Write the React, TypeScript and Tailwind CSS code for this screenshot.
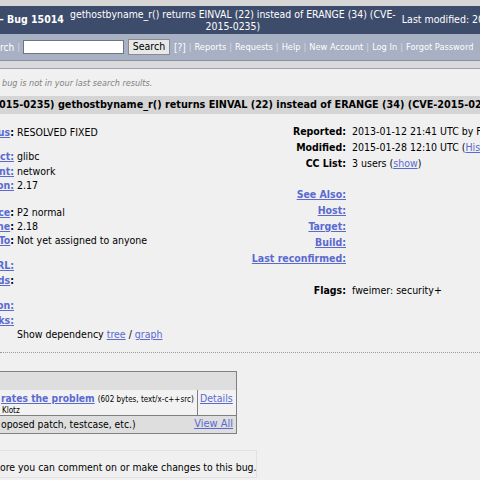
import React from 'react'

const LINK = 'text-[#5a6ad0] underline'

type LeftRow = { linked?: string; tail?: string; value?: React.ReactNode; spacer?: number }

// left column: labels are cut off by the crop, only their ends show
const LEFT: LeftRow[] = [
  { linked: 'Status', tail: ':', value: 'RESOLVED FIXED' },
  { spacer: 10.3 },
  { linked: 'Product:', value: 'glibc' },
  { linked: 'Component:', value: 'network' },
  { linked: 'Version:', value: '2.17' },
  { spacer: 12.3 },
  { linked: 'Importance', tail: ':', value: 'P2 normal' },
  { linked: 'Target Milestone', tail: ':', value: '2.18' },
  { linked: 'Assigned To', tail: ':', value: 'Not yet assigned to anyone' },
  { spacer: 10.3 },
  { linked: 'URL:', value: '' },
  { linked: 'Keywords', tail: ':', value: '' },
  { spacer: 11.3 },
  { linked: 'Depends on:', value: '' },
  { linked: 'Blocks:', value: '' },
  {
    value: (
      <>
        Show dependency <span className={LINK}>tree</span> / <span className={LINK}>graph</span>
      </>
    ),
  },
]

type RightRow = { label?: string; link?: boolean; value?: React.ReactNode; spacer?: number }

const RIGHT: RightRow[] = [
  { label: 'Reported:', value: '2013-01-12 21:41 UTC by Florian Weimer' },
  {
    label: 'Modified:',
    value: (
      <>
        2015-01-28 12:10 UTC (<span className={LINK}>History</span>)
      </>
    ),
  },
  {
    label: 'CC List:',
    value: (
      <>
        3 users (<span className={LINK}>show</span>)
      </>
    ),
  },
  { spacer: 15 },
  { label: 'See Also:', link: true },
  { label: 'Host:', link: true },
  { label: 'Target:', link: true },
  { label: 'Build:', link: true },
  { label: 'Last reconfirmed:', link: true },
  { spacer: 16 },
  { label: 'Flags:', value: 'fweimer: security+' },
]

export default function App() {
  return (
    <div className="w-[480px] h-[480px] overflow-hidden bg-[#f0f0f0] text-black text-[10.5px] font-['DejaVu_Sans_Condensed','DejaVu_Sans',sans-serif]">
      <div className="h-[6px] bg-[#d6d6d6]" />

      {/* header */}
      <div className="h-[28px] bg-[#3e4c6c] flex items-center text-white whitespace-nowrap">
        <span className="font-bold text-[10.5px] -ml-px shrink-0">– Bug 15014</span>
        <div className="ml-[2px] w-[334px] shrink-0 text-center text-[10.4px] leading-[12px]">
          gethostbyname_r() returns EINVAL (22) instead of ERANGE (34) (CVE-
          <br />
          2015-0235)
        </div>
        <span className="ml-[2px] text-[10.5px] shrink-0">Last modified: 2015-01-28 12:10:05 UTC</span>
      </div>

      {/* search bar */}
      <div className="h-[27px] bg-[#a8b0c3] border-b border-[#8891a6] flex items-center text-white text-[9.2px] whitespace-nowrap">
        <span className="shrink-0 text-[10px]">rch</span>
        <span className="mx-[3px] text-[#d8dce6] shrink-0">|</span>
        <div className="w-[101px] h-[14px] shrink-0 bg-white border border-[#6f7480]" />
        <div className="ml-[4px] w-[42px] h-[16px] shrink-0 bg-[#e8e8e8] border border-[#8a8a8a] text-black text-[10.5px] flex items-center justify-center">
          Search
        </div>
        <span className="ml-[4px] shrink-0 text-[10px]">[?]</span>
        {['Reports', 'Requests', 'Help', 'New Account', 'Log In', 'Forgot Password'].map((t) => (
          <React.Fragment key={t}>
            <span className="mx-[3px] text-[#d8dce6] shrink-0">|</span>
            <span className="shrink-0">{t}</span>
          </React.Fragment>
        ))}
      </div>
      <div className="h-[8px] bg-[#dadada] border-b border-[#9aa1b3]" />

      {/* search notice */}
      <div className="mt-[8px] ml-[2px] italic text-[#808080] text-[9px] leading-[13px]">
        bug is not in your last search results.
      </div>

      {/* summary bar */}
      <div className="mt-[6px] h-[18px] bg-[#d5d5d5] flex items-center whitespace-nowrap font-bold text-[10.75px] -ml-px">
        015-0235) gethostbyname_r() returns EINVAL (22) instead of ERANGE (34) (CVE-2015-0235)
      </div>

      {/* fields */}
      <div className="flex mt-[10px] whitespace-nowrap">
        <div className="w-[250px] shrink-0 pt-[1.2px]">
          {LEFT.map((r, i) =>
            r.spacer ? (
              <div key={i} style={{ height: r.spacer }} />
            ) : (
              <div key={i} className="flex h-[14.4px] items-center">
                <div className="w-[110px] -ml-[96px] shrink-0 text-right font-bold">
                  {r.linked && <span className={LINK}>{r.linked}</span>}
                  {r.tail}
                </div>
                <div className="pl-[3px]">{r.value}</div>
              </div>
            ),
          )}
        </div>
        <div>
          {RIGHT.map((r, i) =>
            r.spacer ? (
              <div key={i} style={{ height: r.spacer }} />
            ) : (
              <div key={i} className="flex h-[16px] items-center">
                <div className={`w-[96px] shrink-0 text-right font-bold ${r.link ? LINK : ''}`}>{r.label}</div>
                <div className="pl-[6px]">{r.value}</div>
              </div>
            ),
          )}
        </div>
      </div>

      <div className="mt-[10px] border-t border-dotted border-[#9a9a9a]" />

      {/* attachments */}
      <div className="mt-[18px] -ml-px w-[238px] border border-[#808080] whitespace-nowrap">
        <div className="h-[18px] bg-[#dedede]" />
        <div className="flex h-[25px] bg-[#f2f2f2]">
          <div className="flex-1 min-w-0 pt-[2px] pl-px">
            <div className="leading-[12px]">
              <span className={`${LINK} font-bold text-[10.25px]`}>rates the problem</span>
              <span className="ml-[3px] text-[8px]">(602 bytes, text/x-c++src)</span>
            </div>
            <div className="text-[8px] leading-[10px] pl-px">Klotz</div>
          </div>
          <div className="w-[39px] shrink-0 border-l border-[#808080] pl-[2px] pt-[2px] leading-[12px]">
            <span className={`${LINK} text-[10.5px]`}>Details</span>
          </div>
        </div>
        <div className="flex h-[18px] items-center justify-between bg-[#dedede] border-t border-[#808080] pl-px pr-[3px]">
          <span className="text-[10.3px]">oposed patch, testcase, etc.)</span>
          <span className={`${LINK} text-[11px]`}>View All</span>
        </div>
      </div>

      {/* login notice */}
      <div className="mt-[16px] -ml-px w-[258px] h-[28px] border border-[#e2e2e2] pt-[9px] whitespace-nowrap text-[10.4px]">
        ore you can comment on or make changes to this bug.
      </div>
      <div className="mt-[2px] w-[454px] border-t border-[#d2d2d2]" />
    </div>
  )
}
